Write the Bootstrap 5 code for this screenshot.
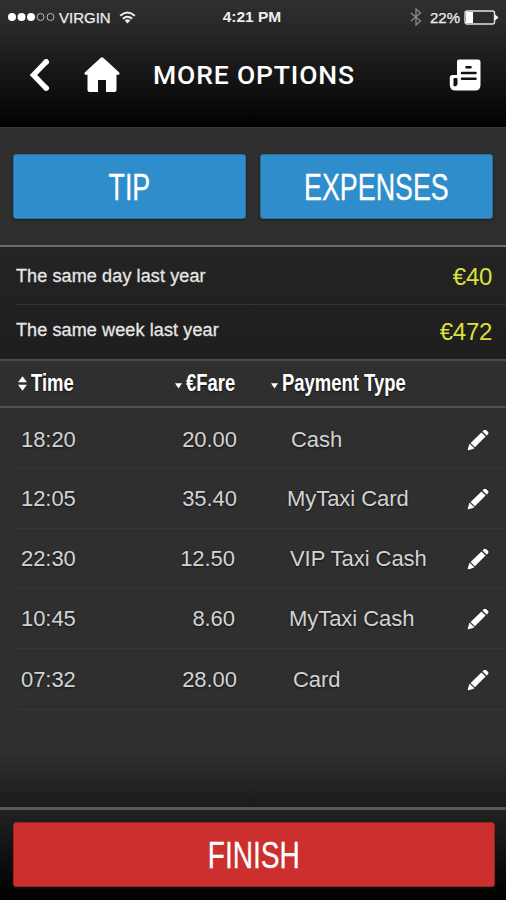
<!DOCTYPE html>
<html lang="en">
<head>
<meta charset="utf-8">
<meta name="viewport" content="width=device-width, initial-scale=1">
<title>More Options</title>
<link href="https://cdn.jsdelivr.net/npm/bootstrap@5.3.0/dist/css/bootstrap.min.css" rel="stylesheet">
<style>
  body { font-family: "Liberation Sans", Arial, sans-serif; background: #2f2f2f; color: #fff; line-height: 1; }
  .screen { height: 900px; overflow: hidden; }
  .top-area { height: 128px; background: linear-gradient(#303030 0, #272727 30px, #020202 126px); border-bottom: 1px solid #3a3a3a; }
  .status { height: 32px; padding: 2px 7px 0 8px; font-size: 15px; color: #eee; -webkit-text-stroke: .25px #eee; }
  .status > div { flex: 1 1 0; }
  .status .clock { flex: 0 0 auto; font-size: 15.5px; font-weight: 700; margin-right: 3px; -webkit-text-stroke: 0; }
  .title-bar { height: 86px; padding: 0 24px 0 28px; }
  .title-bar h1 { font: 500 26.5px/1 Roboto, sans-serif; letter-spacing: .85px; margin-left: 33px; }
  .home-icon { margin-left: 34px; }
  .choices { height: 117px; padding: 26px 13px 0; gap: 14px; }
  .big-btn { height: 65px; flex: 1 1 0; border: 1px solid #2572a5; border-radius: 3px; background: #2f8dcb; color: #fff; font-size: 36.5px; line-height: 1; padding: 3px 0 0; box-shadow: 0 1px 3px #1a1a1a; -webkit-text-stroke: .3px #fff; }
  .big-btn:hover { background: #2f8dcb; color: #fff; }
  .squeeze { display: inline-block; transform: scaleX(.735); }
  .finish-btn .squeeze { transform: scaleX(.77); }
  .finish-btn { background: #cb2f2e; border-color: #972222; }
  .finish-btn:hover { background: #cb2f2e; }
  .summary { height: 116px; background: linear-gradient(#242424, #1e1e1e); border-top: 2px solid #6c6c6c; border-bottom: 2px solid #4b4b4b; }
  .summary-row { margin-left: 16px; padding-right: 14px; height: 57px; font-size: 18px; letter-spacing: .12px; color: #e6e6e6; -webkit-text-stroke: .3px #e6e6e6; }
  .summary-row + .summary-row { height: 55px; border-top: 1px solid #343434; padding-bottom: 4px; }
  .amount { font-size: 24px; letter-spacing: -.3px; color: #dde03c; -webkit-text-stroke: 0; padding-top: 3px; }
  .heads { height: 47px; border-bottom: 2px solid #505050; font-size: 23.5px; font-weight: 700; }
  .heads span { display: inline-block; transform: scaleX(.785); transform-origin: 0 50%; white-space: nowrap; text-shadow: 0 1px 2px #111; }
  .cols { display: grid; grid-template-columns: 151px 120px 1fr; align-items: center; }
  .sorter { padding-left: 18px; }
  .trips { height: 399px; background: linear-gradient(#2f2f2f 345px, #1b1b1b 399px); }
  .trip { display: grid; grid-template-columns: 110px 106px 1fr 24px; align-items: center; height: 61px; margin-left: 17px; padding: 2px 15px 0 4px; border-bottom: 1px solid #383838; font-size: 22px; letter-spacing: -.05px; color: #d3d3d3; text-shadow: 0 1px 2px #151515; }
  .trip.tight { height: 59px; }
  .trip.first-trip { padding-top: 4px; height: 60px; }
  .trip > :nth-child(2) { text-align: right; }
  .trip > :nth-child(3) { padding-left: 50px; }
  .trip > .fare-in { padding-right: 2px; }
  .trip > .indent-a { padding-left: 54px; }
  .trip > .indent-c { padding-left: 53px; }
  .trip > .indent-d { padding-left: 52px; }
  .trip > .indent-e { padding-left: 56px; }
  .bottom-area { height: 93px; background: linear-gradient(#222, #030303 80px); border-top: 3px solid #575757; padding: 12px 11px 0 13px; }
</style>
<script src="https://cdn.jsdelivr.net/npm/bootstrap@5.3.0/dist/js/bootstrap.bundle.min.js"></script>
</head>
<body>
<svg class="d-none">
  <symbol id="pencil" viewBox="0 0 24 24">
    <path d="M1.2 22.8 3 16.6 7.4 21z" fill="#fff" stroke="#fff" stroke-linejoin="round"/>
    <path d="M3.900 15.400 15.800 3.700 20.300 8.200 8.600 19.900z" fill="#fff"/>
    <path d="M16.900 2.600 18.200 1.300c.8-.8 2-.7 2.800 0L22.800 3.100c.8.8.8 2 0 2.800L21.400 7.200z" fill="#fff"/>
  </symbol>
</svg>
<main class="screen d-flex flex-column">
  <header class="top-area">
    <div class="status d-flex align-items-center">
      <div class="d-flex align-items-center">
        <svg width="47" height="10" viewBox="0 0 47 10"><g fill="#fff"><circle cx="4" cy="5" r="4"/><circle cx="13.500" cy="5" r="4"/><circle cx="23" cy="5" r="4"/></g><g fill="none" stroke="#bbb"><circle cx="32.500" cy="5" r="3.500"/><circle cx="42.500" cy="5" r="3.500"/></g></svg>
        <span class="ms-1">VIRGIN</span>
        <svg class="ms-2" width="17" height="13" viewBox="0 0 16 13" fill="none" stroke="#eee" stroke-width="2"><path d="M.7 4.800Q8-1.800 15.300 4.800M3.400 7.800Q8 3.600 12.600 7.800"/><path d="M5.200 9.400Q8 7.300 10.800 9.400L8 12.600z" fill="#eee" stroke="none"/></svg>
      </div>
      <div class="clock">4:21 PM</div>
      <div class="d-flex align-items-center justify-content-end">
        <svg class="me-2" width="12" height="18" viewBox="0 0 12 18" fill="none" stroke="#8a8a8a" stroke-width="1.300"><path d="M1 5 10.500 13 6 17V1l4.500 4L1 13"/></svg>
        <span class="pe-1">22%</span>
        <svg width="35" height="15" viewBox="0 0 35 15"><rect x="1" y="1" width="29.500" height="13" rx="2" fill="none" stroke="#e2e2e2" stroke-width="1.400"/><path d="M2 2h7v11H2z" fill="#fff"/><path d="M31 4.500 34.500 7.500 31 10.500z" fill="#fff"/></svg>
      </div>
    </div>
    <div class="title-bar d-flex align-items-center">
      <svg width="22" height="32" viewBox="0 0 22 32" fill="none" stroke="#fff" stroke-width="5.400"><path d="M18.800 2.200 5.500 16 18.800 29.800"/><path d="M17.700 3.400 18.300 2.800M17.700 28.600 18.300 29.200" stroke-linecap="round"/></svg>
      <svg class="home-icon" width="36" height="36" viewBox="0 0 36 36" fill="#fff"><path d="M16.500.9Q18-.4 19.500.9L35 15.300q1 1.300 0 2.500h-2.500V33q0 2-2 2H22V23h-8v12H5.500q-2 0-2-2V17.800H1q-1-1.200 0-2.500z"/></svg>
      <h1 class="mb-0">MORE OPTIONS</h1>
      <svg class="ms-auto" width="33" height="32" viewBox="0 0 33 32"><path d="M10 .5h19q2.500 0 2.500 2.500v23q0 5.500-5.500 5.500H6.500Q1 31.500.8 26v-7.500Q.8 16 3.500 16H8V2.500Q8 .5 10 .5z" fill="#fff"/><path d="M8 19.500v5.500q0 2-3 2V19.500z" fill="#111" stroke="#111"/><path d="M17.500 8.300h4M13 14h13.500M13 19.700h13.500" stroke="#111" stroke-width="2.600" stroke-linecap="round"/></svg>
    </div>
  </header>
  <section class="choices d-flex">
    <button class="btn big-btn"><span class="squeeze">TIP</span></button>
    <button class="btn big-btn"><span class="squeeze">EXPENSES</span></button>
  </section>
  <section class="summary">
    <div class="summary-row d-flex align-items-center justify-content-between"><span>The same day last year</span><span class="amount">€40</span></div>
    <div class="summary-row d-flex align-items-center justify-content-between"><span>The same week last year</span><span class="amount">€472</span></div>
  </section>
  <section class="heads cols">
    <div class="sorter d-flex align-items-center"><svg class="me-1" width="9" height="17" viewBox="0 0 10 18" fill="#fff"><path d="M0 7.500 5 1l5 6.500zM0 10.500h10L5 17z"/></svg><span>Time</span></div>
    <div class="d-flex align-items-center ps-4"><svg class="me-1 mt-1" width="7" height="7" viewBox="0 0 9 8" fill="#fff"><path d="M0 1h9L4.500 8z"/></svg><span>€Fare</span></div>
    <div class="d-flex align-items-center"><svg class="me-1 mt-1" width="7" height="7" viewBox="0 0 9 8" fill="#fff"><path d="M0 1h9L4.500 8z"/></svg><span>Payment Type</span></div>
  </section>
  <section class="trips">
    <div class="trip first-trip"><span>18:20</span><span>20.00</span><span class="indent-a">Cash</span><svg width="22" height="22"><use href="#pencil"/></svg></div>
    <div class="trip"><span>12:05</span><span>35.40</span><span>MyTaxi Card</span><svg width="22" height="22"><use href="#pencil"/></svg></div>
    <div class="trip tight"><span>22:30</span><span class="fare-in">12.50</span><span class="indent-c">VIP Taxi Cash</span><svg width="22" height="22"><use href="#pencil"/></svg></div>
    <div class="trip"><span>10:45</span><span class="fare-in">8.60</span><span class="indent-d">MyTaxi Cash</span><svg width="22" height="22"><use href="#pencil"/></svg></div>
    <div class="trip"><span>07:32</span><span>28.00</span><span class="indent-e">Card</span><svg width="22" height="22"><use href="#pencil"/></svg></div>
  </section>
  <footer class="bottom-area">
    <button class="btn big-btn finish-btn w-100"><span class="squeeze">FINISH</span></button>
  </footer>
</main>
</body>
</html>
